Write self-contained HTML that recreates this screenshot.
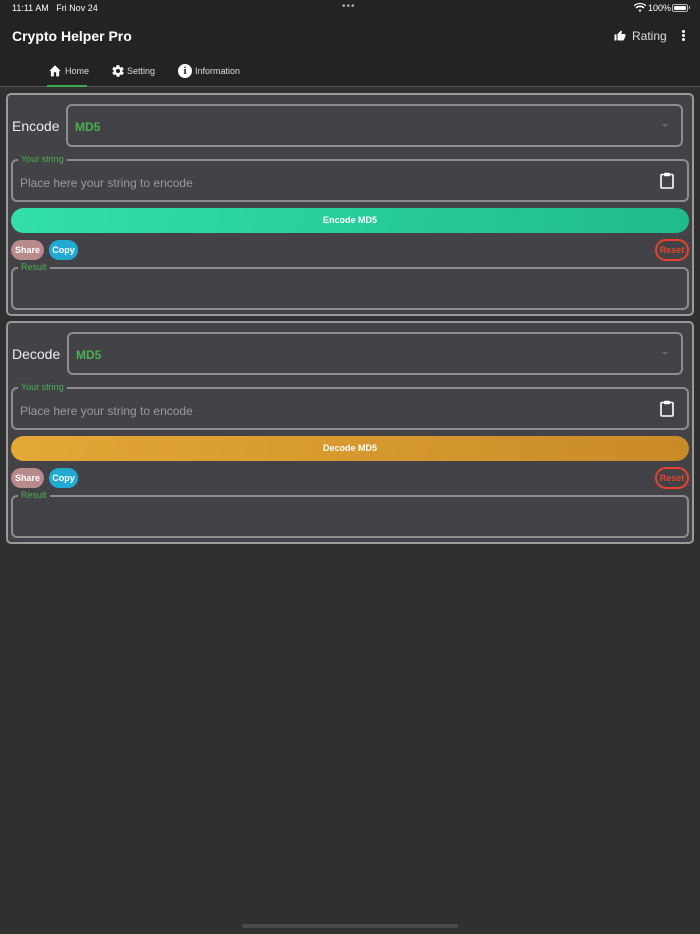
<!DOCTYPE html>
<html><head><meta charset="utf-8"><style>
*{box-sizing:border-box;margin:0;padding:0}
body{width:700px;height:934px;background:#303030;font-family:"Liberation Sans",sans-serif;position:relative;overflow:hidden;color:#fff}
.a{position:absolute}
.hdr{left:0;top:0;width:700px;height:87px;background:#232323;border-bottom:1px solid #555}
.card{left:6px;width:688px;height:223px;background:#434247;border:2px solid #9a9a9a;border-radius:5px}
.sel{border:2px solid #8e8e8e;border-radius:6px;height:43px}
.fld{border:2px solid #8e8e8e;border-radius:6px;height:43px;left:3px;width:678px}
.lbl{font-size:9px;color:#4caf50;background:#434247;padding:0 3px;top:-7px;left:5px}
.ph{font-size:12px;color:#9a9a9a;left:7px;top:15px}
.btn{left:3px;width:678px;height:25px;border-radius:13px;font-size:9px;font-weight:bold;text-align:center;line-height:25px}
.pill{height:20px;border-radius:10px;font-size:9px;font-weight:bold;text-align:center;line-height:20px}
.md5{color:#4caf50;font-weight:bold;font-size:12px;left:7px;top:14px}
.tri{right:13px;top:18px;width:0;height:0;border-left:3px solid transparent;border-right:3px solid transparent;border-top:3px solid #666}
</style></head><body>
<div class="a hdr">
<div class="a" style="left:12px;top:3px;font-size:9px">11:11 AM&nbsp;&nbsp; Fri Nov 24</div>
<div class="a" style="left:342px;top:1px;font-size:10px;color:#aaa;letter-spacing:1px">•••</div>
<svg class="a" style="left:634px;top:3px" width="12" height="10" viewBox="0 0 24 20"><path d="M12 18l3-3.5a4.5 4.5 0 0 0-6 0zM5 11a10 10 0 0 1 14 0l2-2.3a13 13 0 0 0-18 0zM1 6.5a16 16 0 0 1 22 0L24.5 4.5a19 19 0 0 0-25 0z" fill="#fff"/></svg>
<div class="a" style="left:648px;top:3px;font-size:9px">100%</div>
<div class="a" style="left:672px;top:4px;width:16px;height:8px;border:1px solid #bbb;border-radius:2px;padding:1px"><div style="width:100%;height:100%;background:#fff;border-radius:1px"></div></div>
<div class="a" style="left:689px;top:6px;width:1px;height:3px;background:#bbb"></div>
<div class="a" style="left:12px;top:28px;font-size:14px;font-weight:bold">Crypto Helper Pro</div>
<svg class="a" style="left:614px;top:30px" width="12" height="12" viewBox="0 0 24 24"><path d="M1 21h4V9H1zm22-11c0-1.1-.9-2-2-2h-6.3l1-4.6v-.3c0-.4-.2-.8-.4-1.1L14.2 1 7.6 7.6C7.2 7.9 7 8.4 7 9v10c0 1.1.9 2 2 2h9c.8 0 1.5-.5 1.8-1.2l3-7.1c.1-.2.2-.5.2-.7z" fill="#fff"/></svg>
<div class="a" style="left:632px;top:29px;font-size:12px;color:#ddd">Rating</div>
<div class="a" style="left:682px;top:30px;width:3px;height:3px;background:#fff;border-radius:50%;box-shadow:0 4px 0 #fff,0 8px 0 #fff"></div>
<svg class="a" style="left:48px;top:64px" width="14" height="13" viewBox="0 0 24 22"><path d="M10 21v-7h4v7h5v-9h3L12 2 2 12h3v9z" fill="#fff"/></svg>
<div class="a" style="left:65px;top:66px;font-size:9px;color:#ddd">Home</div>
<div class="a" style="left:47px;top:85px;width:40px;height:2px;background:#3ea84a"></div>
<svg class="a" style="left:111px;top:64px" width="14" height="14" viewBox="0 0 24 24"><path d="M19.4 13c.04-.3.06-.6.06-1s-.02-.7-.06-1l2.1-1.6c.2-.15.25-.4.12-.6l-2-3.5c-.12-.2-.38-.3-.6-.2l-2.5 1c-.5-.4-1.1-.7-1.7-1l-.4-2.6A.5.5 0 0 0 14 2h-4a.5.5 0 0 0-.5.4l-.4 2.6c-.6.3-1.2.6-1.700 1l-2.5-1c-.2-.1-.5 0-.6.2l-2 3.5c-.13.2-.08.45.12.6L4.6 11c-.04.3-.06.7-.06 1s.02.7.06 1l-2.1 1.6c-.2.15-.25.4-.12.6l2 3.5c.12.2.38.3.6.2l2.5-1c.5.4 1.1.7 1.7 1l.4 2.6c.04.24.25.4.5.4h4c.25 0 .46-.16.5-.4l.4-2.6c.6-.3 1.2-.6 1.7-1l2.5 1c.2.1.5 0 .6-.2l2-3.5c.13-.2.08-.45-.12-.6zM12 15.5A3.5 3.5 0 1 1 12 8.5a3.5 3.5 0 0 1 0 7z" fill="#fff"/></svg>
<div class="a" style="left:127px;top:66px;font-size:9px;color:#ddd">Setting</div>
<div class="a" style="left:178px;top:64px;width:14px;height:14px;border-radius:50%;background:#fff;color:#232323;font-size:11px;font-weight:bold;text-align:center;line-height:14px;font-family:'Liberation Serif',serif">i</div>
<div class="a" style="left:195px;top:66px;font-size:9px;color:#ddd">Information</div>
</div>

<div class="a card" style="top:93px">
<div class="a" style="left:4px;top:23px;font-size:14px;color:#eee">Encode</div>
<div class="a sel" style="left:58px;top:9px;width:617px"><div class="a md5">MD5</div><div class="a tri"></div></div>
<div class="a fld" style="top:64px"><div class="a lbl">Your string</div><div class="a ph">Place here your string to encode</div>
<svg class="a" style="left:647px;top:11px" width="14" height="17" viewBox="0 0 14 17"><rect x="1" y="2.5" width="12" height="13.5" rx="1" fill="none" stroke="#fff" stroke-width="1.6"/><rect x="4" y="0.8" width="6" height="3.5" rx="0.8" fill="#fff"/></svg></div>
<div class="a btn" style="top:113px;background:linear-gradient(100deg,#33e0aa,#1fbb8a)">Encode MD5</div>
<div class="a pill" style="left:3px;top:145px;width:33px;background:#b98a8b">Share</div>
<div class="a pill" style="left:41px;top:145px;width:29px;background:#22aad3">Copy</div>
<div class="a pill" style="left:647px;top:144px;width:34px;height:22px;line-height:19px;border:2px solid #e5432e;color:#e5432e;border-radius:11px">Reset</div>
<div class="a fld" style="top:172px"><div class="a lbl">Result</div></div>
</div>

<div class="a card" style="top:321px">
<div class="a" style="left:4px;top:23px;font-size:14px;color:#eee">Decode</div>
<div class="a sel" style="left:59px;top:9px;width:616px"><div class="a md5">MD5</div><div class="a tri"></div></div>
<div class="a fld" style="top:64px"><div class="a lbl">Your string</div><div class="a ph">Place here your string to encode</div>
<svg class="a" style="left:647px;top:11px" width="14" height="17" viewBox="0 0 14 17"><rect x="1" y="2.5" width="12" height="13.5" rx="1" fill="none" stroke="#fff" stroke-width="1.6"/><rect x="4" y="0.8" width="6" height="3.5" rx="0.8" fill="#fff"/></svg></div>
<div class="a btn" style="top:113px;background:linear-gradient(100deg,#e4a835,#c98a28)">Decode MD5</div>
<div class="a pill" style="left:3px;top:145px;width:33px;background:#b98a8b">Share</div>
<div class="a pill" style="left:41px;top:145px;width:29px;background:#22aad3">Copy</div>
<div class="a pill" style="left:647px;top:144px;width:34px;height:22px;line-height:19px;border:2px solid #e5432e;color:#e5432e;border-radius:11px">Reset</div>
<div class="a fld" style="top:172px"><div class="a lbl">Result</div></div>
</div>

<div class="a" style="left:242px;top:924px;width:216px;height:4px;border-radius:2px;background:#4a4a4a"></div>
</body></html>
